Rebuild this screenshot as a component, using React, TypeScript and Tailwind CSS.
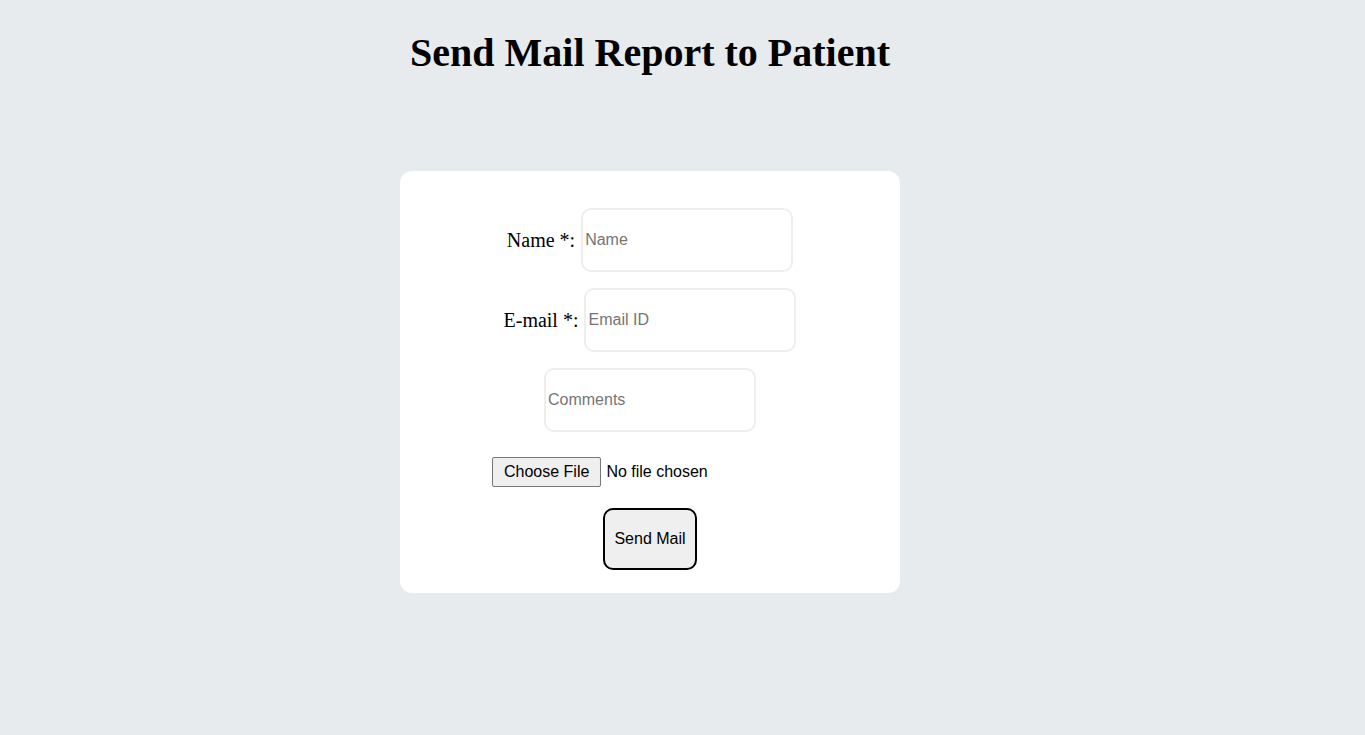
import { useState } from 'react'

export default function App() {
  const [name, setName] = useState('')
  const [email, setEmail] = useState('')
  const [comments, setComments] = useState('')

  return (
    <div className="min-h-[735px] bg-[#e8ebee] font-['Liberation_Serif',serif] text-black">
      <div className="w-[1300px] flex flex-col items-center pt-[23px]">
        <h1 className="text-[40px] font-bold leading-normal">Send Mail Report to Patient</h1>

        {/* Form card */}
        <form
          onSubmit={(e) => e.preventDefault()}
          className="mt-[88px] w-[500px] bg-white rounded-[12px] pt-[37px] pb-[23px] flex flex-col items-center"
        >
          <div className="flex items-center gap-1.5">
            <label className="text-[20px]">Name *:</label>
            <input
              type="text"
              placeholder="Name"
              value={name}
              onChange={(e) => setName(e.target.value)}
              className="w-[212px] h-16 px-[2px] border-2 border-[#eeeeee] rounded-[10px] font-['Liberation_Sans',sans-serif] text-base outline-none placeholder:text-[#757575]"
            />
          </div>

          <div className="flex items-center gap-1.5 mt-4">
            <label className="text-[20px]">E-mail *:</label>
            <input
              type="email"
              placeholder="Email ID"
              value={email}
              onChange={(e) => setEmail(e.target.value)}
              className="w-[212px] h-16 px-[2px] border-2 border-[#eeeeee] rounded-[10px] font-['Liberation_Sans',sans-serif] text-base outline-none placeholder:text-[#757575]"
            />
          </div>

          <input
            type="text"
            placeholder="Comments"
            value={comments}
            onChange={(e) => setComments(e.target.value)}
            className="mt-4 w-[212px] h-16 px-[2px] border-2 border-[#eeeeee] rounded-[10px] font-['Liberation_Sans',sans-serif] text-base outline-none placeholder:text-[#757575]"
          />

          <input
            type="file"
            className="mt-[25px] w-[316px] font-['Liberation_Sans',sans-serif] text-base file:px-[11px] file:py-0.5 file:border file:border-[#767676] file:rounded-[2px] file:bg-[#efefef] file:mr-[5px] file:text-black"
          />

          <button
            type="submit"
            className="mt-[21px] w-[94px] h-[62px] border-2 border-black rounded-[10px] bg-[#efefef] font-['Liberation_Sans',sans-serif] text-base"
          >
            Send Mail
          </button>
        </form>
      </div>
    </div>
  )
}
